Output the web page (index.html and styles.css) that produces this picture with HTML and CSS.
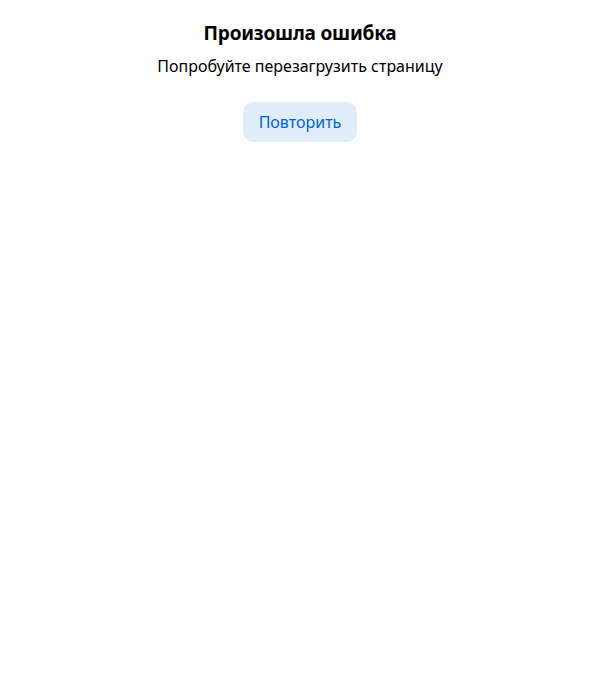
FILE: index.html
```html
<!DOCTYPE html>
<html lang="ru">
<head>
<meta charset="utf-8">
<link rel="stylesheet" href="styles.css">
</head>
<body>
<div class="error">
  <h1 class="error__title">Произошла ошибка</h1>
  <p class="error__text">Попробуйте перезагрузить страницу</p>
  <button class="error__button" type="button">Повторить</button>
</div>
</body>
</html>
```
FILE: styles.css
```css
html, body {
  margin: 0;
  padding: 0;
  background: #fff;
}
body {
  font-family: "Noto Sans", "Open Sans", sans-serif;
  color: #000;
}
.error {
  display: flex;
  flex-direction: column;
  align-items: center;
  padding-top: 20px;
}
.error__title {
  margin: 0;
  font-size: 19px;
  line-height: 26px;
  font-weight: 700;
  letter-spacing: -0.2px;
}
.error__text {
  margin: 10px 0 0;
  font-size: 16px;
  line-height: 20px;
}
.error__button {
  margin-top: 26px;
  height: 40px;
  padding: 0 16px;
  border: 0;
  border-radius: 10px;
  background: #e0edfb;
  color: #0064d2;
  font-family: inherit;
  font-size: 16px;
  cursor: pointer;
}
```
